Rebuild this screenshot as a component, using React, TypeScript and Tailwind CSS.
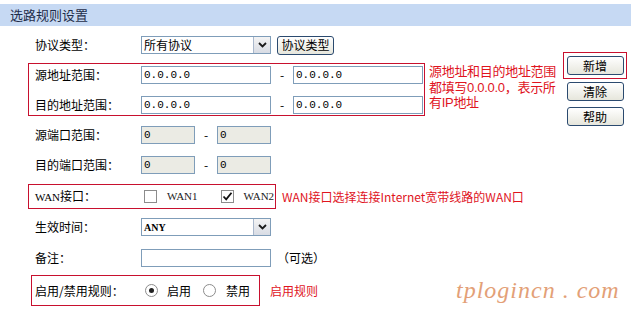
import React from "react";

const cjk = { fontFamily: '"Noto Sans CJK SC", "Noto Sans", sans-serif' };
const note = { fontFamily: '"Liberation Sans", "Noto Sans CJK SC", sans-serif' };
const mono = { fontFamily: '"Liberation Mono", "Noto Sans CJK SC", monospace' };
const serif = { fontFamily: '"Liberation Serif", "Noto Sans CJK SC", serif' };

function TextBox({ value, width, gray }: { value: string; width: string; gray?: boolean }) {
  return (
    <div
      className={`${width} h-[18px] border border-[#7f9db9] ${gray ? "bg-[#ebebe4]" : "bg-white"} pl-[2px] text-[11px] leading-[16px] text-black`}
      style={mono}
    >
      {value}
    </div>
  );
}

function Select({ value, small }: { value: string; small?: boolean }) {
  return (
    <div className="flex h-[18px] w-[130px] items-center border border-[#7f9db9] bg-white">
      <span
        className={small ? "flex-1 pl-[2px] text-[10px] font-bold" : "flex-1 pl-[2px] text-[12px]"}
        style={small ? serif : cjk}
      >
        {value}
      </span>
      <span className="flex h-[16px] w-[17px] items-center justify-center border-l border-[#aab8cc] bg-gradient-to-b from-[#f4f4f4] to-[#d8dce4]">
        <svg width="9" height="6" viewBox="0 0 9 6">
          <path d="M1 1 L4.5 4.5 L8 1" fill="none" stroke="#1a1a1a" strokeWidth="1.8" />
        </svg>
      </span>
    </div>
  );
}

function Btn({ label, className }: { label: string; className?: string }) {
  return (
    <div
      className={`flex h-[19px] items-center justify-center rounded-[3px] border border-[#2b4a6f] bg-gradient-to-b from-white to-[#e6e6dc] text-[12px] text-black ${className ?? ""}`}
      style={cjk}
    >
      {label}
    </div>
  );
}

function Label({ text }: { text: React.ReactNode }) {
  return (
    <div className="w-[106px] shrink-0 text-[12px] text-black" style={cjk}>
      {text}
    </div>
  );
}

function Checkbox({ checked }: { checked?: boolean }) {
  return (
    <div className="flex h-[13px] w-[13px] items-center justify-center border border-[#8c8c8c] bg-white">
      {checked && (
        <svg width="11" height="11" viewBox="0 0 11 11">
          <path d="M1.5 5.5 L4.2 8.3 L9.5 1.8" fill="none" stroke="#111" strokeWidth="1.8" />
        </svg>
      )}
    </div>
  );
}

function Radio({ checked }: { checked?: boolean }) {
  return (
    <div className="flex h-[13px] w-[13px] items-center justify-center rounded-full border border-[#8c8c8c] bg-white">
      {checked && <div className="h-[5px] w-[5px] rounded-full bg-[#222]" />}
    </div>
  );
}

export default function App() {
  return (
    <div className="relative h-[313px] w-[631px] overflow-hidden bg-white" style={cjk}>
      <div className="mt-[4px] h-[22px] bg-[#c6d9f3] pl-[10px] text-[13px] leading-[22px] text-[#1f2d4a]">
        选路规则设置
      </div>

      <div className="flex">
        <div className="ml-[28px] flex min-w-0 flex-1 flex-col">
          {/* 协议类型 */}
          <div className="mt-[9px] flex h-[20px] items-center pl-[7px]">
            <Label text="协议类型：" />
            <Select value="所有协议" />
            <Btn label="协议类型" className="ml-[6px] w-[57px]" />
          </div>

          {/* 地址范围 */}
          <div className="mt-[8px] flex items-start">
            <div className="flex h-[53px] w-[397px] shrink-0 flex-col border border-[#c8102e] pl-[6px] pt-[2px]">
              <div className="flex h-[18px] items-center">
                <Label text="源地址范围：" />
                <TextBox value="0.0.0.0" width="w-[130px]" />
                <span className="w-[22px] text-center text-[12px]">-</span>
                <TextBox value="0.0.0.0" width="w-[130px]" />
              </div>
              <div className="mt-[12px] flex h-[18px] items-center">
                <Label text="目的地址范围：" />
                <TextBox value="0.0.0.0" width="w-[130px]" />
                <span className="w-[22px] text-center text-[12px]">-</span>
                <TextBox value="0.0.0.0" width="w-[130px]" />
              </div>
            </div>
            <div
              className="ml-[4px] flex flex-col whitespace-nowrap pt-[1px] text-[13px] leading-[15.5px] tracking-[-0.3px] text-[#e0141e]"
              style={note}
            >
              <span>源地址和目的地址范围</span>
              <span>都填写0.0.0.0，表示所</span>
              <span>有IP地址</span>
            </div>
          </div>

          {/* 端口 */}
          <div className="mt-[10px] flex h-[18px] items-center pl-[7px]">
            <Label text="源端口范围：" />
            <TextBox value="0" width="w-[54px]" gray />
            <span className="w-[22px] text-center text-[12px]">-</span>
            <TextBox value="0" width="w-[54px]" gray />
          </div>
          <div className="mt-[12px] flex h-[18px] items-center pl-[7px]">
            <Label text="目的端口范围：" />
            <TextBox value="0" width="w-[54px]" gray />
            <span className="w-[22px] text-center text-[12px]">-</span>
            <TextBox value="0" width="w-[54px]" gray />
          </div>

          {/* WAN */}
          <div className="mt-[10px] flex items-center">
            <div className="flex h-[25px] w-[248px] shrink-0 items-center border border-[#c8102e] pl-[6px]">
              <Label
                text={
                  <>
                    <span className="text-[11px]" style={serif}>WAN</span>接口：
                  </>
                }
              />
              <div className="ml-[3px]">
                <Checkbox />
              </div>
              <span className="ml-[10px] text-[11px] text-[#222]" style={serif}>WAN1</span>
              <div className="ml-[23px]">
                <Checkbox checked />
              </div>
              <span className="ml-[10px] text-[11px] text-[#222]" style={serif}>WAN2</span>
            </div>
            <span className="ml-[6px] whitespace-nowrap text-[12px] text-[#e0141e]">
              WAN接口选择连接Internet宽带线路的WAN口
            </span>
          </div>

          {/* 生效时间 */}
          <div className="mt-[9px] flex h-[18px] items-center pl-[7px]">
            <Label text="生效时间：" />
            <Select value="ANY" small />
          </div>

          {/* 备注 */}
          <div className="mt-[13px] flex h-[18px] items-center pl-[7px]">
            <Label text="备注：" />
            <TextBox value="" width="w-[130px]" />
            <span className="ml-[6px] text-[12px] text-black">（可选）</span>
          </div>

          {/* 启用 */}
          <div className="ml-[3px] mt-[8px] flex items-center">
            <div className="flex h-[31px] w-[229px] shrink-0 items-center border border-[#c8102e] pl-[3px]">
              <Label text="启用/禁用规则：" />
              <div className="ml-[4px]">
                <Radio checked />
              </div>
              <span className="ml-[9px] text-[12px]">启用</span>
              <div className="ml-[12px]">
                <Radio />
              </div>
              <span className="ml-[10px] text-[12px]">禁用</span>
            </div>
            <span className="ml-[10px] text-[12px] text-[#e0141e]">启用规则</span>
          </div>
        </div>

        {/* 右侧按钮 */}
        <div className="mr-[4px] mt-[26px] flex w-[64px] shrink-0 flex-col items-center">
          <div className="flex h-[27px] w-[64px] items-center justify-center border border-[#c8102e]">
            <Btn label="新增" className="w-[57px]" />
          </div>
          <Btn label="清除" className="mt-[3px] w-[57px]" />
          <Btn label="帮助" className="mt-[6px] w-[57px]" />
        </div>
      </div>

      <div
        className="absolute left-[456px] top-[272px] text-[24px] italic tracking-[1px] text-[#e3a077]"
        style={serif}
      >
        tplogincn . com
      </div>
    </div>
  );
}
